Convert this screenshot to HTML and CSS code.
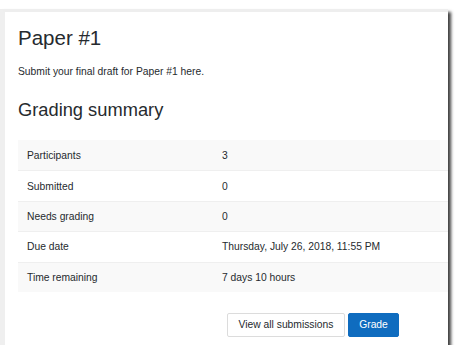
FILE: index.html
```html
<!DOCTYPE html>
<html lang="en">
<head>
<meta charset="utf-8">
<title>Paper #1</title>
<link rel="stylesheet" href="styles.css">
</head>
<body>
<div class="frame">
  <div class="page">
    <h2 class="title">Paper #1</h2>
    <p class="intro">Submit your final draft for Paper #1 here.</p>
    <h3 class="subtitle">Grading summary</h3>
    <div class="summary">
      <div class="row striped"><span>Participants</span><span>3</span></div>
      <div class="row"><span>Submitted</span><span>0</span></div>
      <div class="row striped"><span>Needs grading</span><span>0</span></div>
      <div class="row"><span>Due date</span><span>Thursday, July 26, 2018, 11:55 PM</span></div>
      <div class="row striped"><span>Time remaining</span><span>7 days 10 hours</span></div>
    </div>
    <div class="actions">
      <button class="btn btn-secondary">View all submissions</button>
      <button class="btn btn-primary">Grade</button>
    </div>
  </div>
</div>
</body>
</html>
```
FILE: styles.css
```css
* { box-sizing: border-box; }
html, body { margin: 0; padding: 0; background: #fff; }
body {
  font-family: "Liberation Sans", Arial, sans-serif;
  font-size: 10.3px;
  line-height: 15px;
  color: #262a2e;
}
.frame {
  margin-top: 9px;
  width: 448px;
  height: 336px;
  border-top: 3px solid #eeeeee;
  border-left: 5px solid #efefef;
  background: #fff;
  box-shadow: 3px 3px 3px rgba(0,0,0,0.75);
  overflow: hidden;
}
.page {
  padding-left: 13px;
}
.title {
  margin: 14px 0 0 0;
  font-size: 20.5px;
  line-height: 24px;
  font-weight: 400;
}
.intro {
  margin: 14px 0 0 0;
}
.subtitle {
  margin: 20px 0 0 0;
  font-size: 18.3px;
  line-height: 22px;
  font-weight: 400;
}
.summary {
  margin-top: 19px;
}
.row {
  display: grid;
  grid-template-columns: 195px 1fr;
  align-items: center;
  height: 30.4px;
  padding-left: 9px;
  border-top: 1px solid #efefef;
}
.row:first-child { border-top-color: #f9f9f9; }
.striped { background: #f9f9f9; }
.actions {
  display: flex;
  justify-content: flex-end;
  gap: 3px;
  margin-top: 21px;
  padding-right: 49px;
}
.btn {
  height: 24px;
  font-family: inherit;
  font-size: 10.3px;
  line-height: 15px;
  border-radius: 2px;
  border: 1px solid #dcdcdc;
  padding: 0 10px;
  margin: 0;
  cursor: pointer;
}
.btn-secondary {
  width: 118px;
  background: #fff;
  color: #262a2e;
}
.btn-primary {
  width: 51px;
  background: #0f6cbf;
  border-color: #0f6cbf;
  color: #fff;
}
```
